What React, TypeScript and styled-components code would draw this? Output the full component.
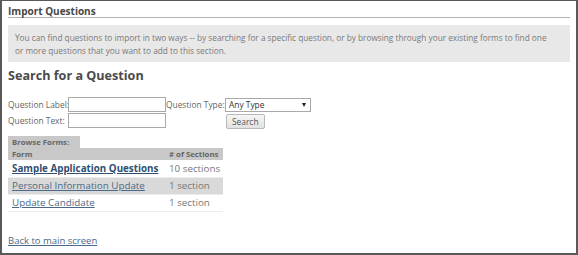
import React from "react";
import styled, { createGlobalStyle } from "styled-components";

const Global = createGlobalStyle`
  html, body { margin: 0; padding: 0; background: #fff; }
  body { font-family: "Open Sans", "Liberation Sans", sans-serif; color: #666; }
  * { box-sizing: border-box; }
`;

const Frame = styled.div`
  width: 578px;
  height: 255px;
  border: 2px solid #595959;
  border-top-width: 1px;
  padding: 1px 6px 0 6px;
  overflow: hidden;
`;

const Title = styled.h2`
  margin: 0;
  font-size: 10px;
  font-weight: 700;
  color: #474747;
  line-height: 12px;
  padding-top: 3px;
  padding-bottom: 0;
  border-bottom: 1px solid #b0b0b0;
`;

const InfoBox = styled.div`
  margin-top: 7px;
  background: #e8e8e8;
  padding: 6px 14px 5px 7px;
  font-size: 8.25px;
  line-height: 13px;
  color: #7a7a7a;
`;

const Heading = styled.h3`
  margin: 5px 0 0 0;
  font-size: 12.6px;
  font-weight: 700;
  color: #4a4a4a;
  line-height: 18px;
`;

const FormGrid = styled.div`
  margin-top: 12px;
  display: grid;
  grid-template-columns: 60px 98px 59px auto;
  grid-auto-rows: 15px;
  row-gap: 1px;
  align-items: center;
  font-size: 8.4px;
  color: #666;
`;

const Label = styled.label`
  white-space: nowrap;
  line-height: 14px;
`;

const TextInput = styled.input`
  width: 98px;
  height: 15px;
  border: 1px solid #a9a9a9;
  padding: 0;
  margin: 0;
  font-size: 9px;
`;

const SelectBox = styled.div`
  width: 86px;
  height: 14px;
  border: 1px solid #a9a9a9;
  font-size: 8.4px;
  color: #333;
  display: flex;
  align-items: center;
  justify-content: space-between;
  padding: 0 4px 0 3px;
  background: #fff;
`;

const Arrow = styled.span`
  width: 0;
  height: 0;
  border-left: 2.5px solid transparent;
  border-right: 2.5px solid transparent;
  border-top: 4px solid #222;
`;

const Button = styled.button`
  justify-self: start;
  height: 15px;
  padding: 0 5px;
  font-family: "Open Sans", sans-serif;
  font-size: 8.4px;
  color: #555;
  background: linear-gradient(#f6f6f6, #e2e2e2);
  border: 1px solid #b8b8b8;
  border-radius: 2px;
  margin-left: 1px;
  margin-top: 1px;
`;

const Browse = styled.div`
  margin-top: 8px;
  width: 215px;
`;

const Tab = styled.div`
  width: 72px;
  height: 12px;
  background: #c8c8c8;
  font-size: 7.8px;
  font-weight: 700;
  color: #666;
  padding: 0 4px;
  line-height: 13px;
  white-space: nowrap;
`;

const Table = styled.table`
  width: 215px;
  border-collapse: collapse;
  font-size: 9.8px;
  table-layout: fixed;
`;

const HeadCell = styled.th<{ $w: number }>`
  width: ${(p) => p.$w}px;
  background: #c8c8c8;
  font-size: 7.8px;
  font-weight: 700;
  color: #666;
  text-align: left;
  padding: 0 4px;
  height: 12px;
  line-height: 12px;
  white-space: nowrap;
`;

const Row = styled.tr<{ $alt?: boolean }>`
  background: ${(p) => (p.$alt ? "#d9d9d9" : "#fff")};
  border-bottom: 1px solid #ececec;
`;

const Cell = styled.td`
  padding: 1px 4px 0;
  height: 17px;
  line-height: 14px;
  color: #777;
  white-space: nowrap;
`;

const Link = styled.a<{ $bold?: boolean }>`
  color: ${(p) => (p.$bold ? "#2f4f70" : "#4a6a88")};
  font-weight: ${(p) => (p.$bold ? 700 : 400)};
  text-decoration: underline;
`;

const Footer = styled.div`
  margin-top: 22px;
  font-size: 9.5px;
  line-height: 14px;
`;

const forms = [
  { name: "Sample Application Questions", count: "10 sections", bold: true },
  { name: "Personal Information Update", count: "1 section" },
  { name: "Update Candidate", count: "1 section" },
];

export default function App() {
  return (
    <>
      <Global />
      <Frame>
        <Title>Import Questions</Title>
        <InfoBox>
          You can find questions to import in two ways -- by searching for a specific question, or by browsing through your existing forms to find one
          or more questions that you want to add to this section.
        </InfoBox>
        <Heading>Search for a Question</Heading>
        <FormGrid>
          <Label>Question Label:</Label>
          <TextInput />
          <Label>Question Type:</Label>
          <SelectBox>
            Any Type <Arrow />
          </SelectBox>
          <Label>Question Text:</Label>
          <TextInput />
          <span />
          <Button>Search</Button>
        </FormGrid>
        <Browse>
          <Tab>Browse Forms:</Tab>
          <Table>
            <thead>
              <tr>
                <HeadCell $w={157}>Form</HeadCell>
                <HeadCell $w={58}># of Sections</HeadCell>
              </tr>
            </thead>
            <tbody>
              {forms.map((f, i) => (
                <Row key={f.name} $alt={i === 1}>
                  <Cell>
                    <Link href="#" $bold={f.bold}>{f.name}</Link>
                  </Cell>
                  <Cell>{f.count}</Cell>
                </Row>
              ))}
            </tbody>
          </Table>
        </Browse>
        <Footer>
          <Link href="#">Back to main screen</Link>
        </Footer>
      </Frame>
    </>
  );
}
